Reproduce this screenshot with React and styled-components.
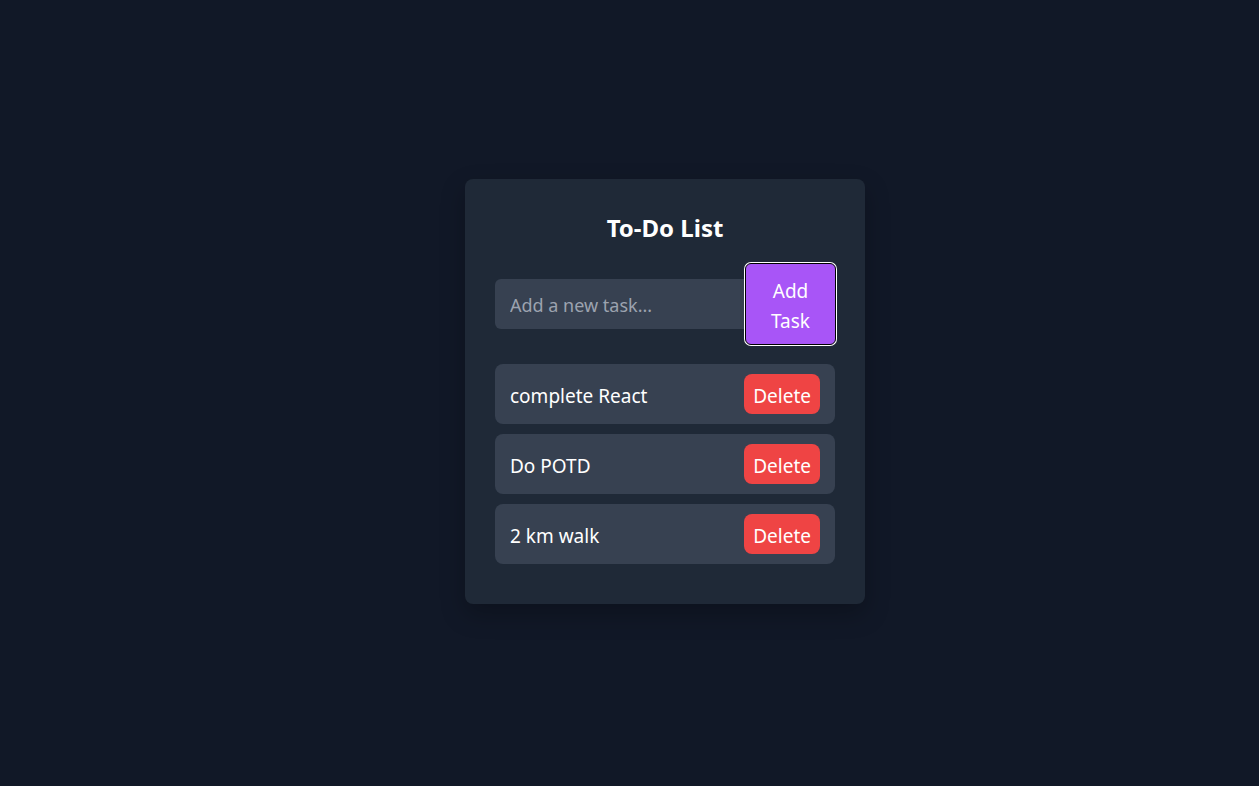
import React, { useState } from "react";
import styled, { createGlobalStyle } from "styled-components";

const GlobalStyle = createGlobalStyle`
  html, body {
    margin: 0;
    padding: 0;
    background: #111827;
  }
  body {
    font-family: "Noto Sans", "Open Sans", sans-serif;
  }
  * {
    box-sizing: border-box;
  }
`;

function App() {
  const [tasks, setTasks] = useState(["complete React", "Do POTD", "2 km walk"]);
  const [text, setText] = useState("");

  const addTask = () => {
    if (!text.trim()) return;
    setTasks([...tasks, text.trim()]);
    setText("");
  };

  return (
    <Page>
      <GlobalStyle />
      <Card>
        <Title>To-Do List</Title>
        <InputRow>
          <TaskInput
            placeholder="Add a new task..."
            value={text}
            onChange={(e) => setText(e.target.value)}
          />
          <AddBtn onClick={addTask}>Add Task</AddBtn>
        </InputRow>
        <TaskList>
          {tasks.map((t, i) => (
            <TaskItem key={i}>
              <span>{t}</span>
              <DeleteBtn onClick={() => setTasks(tasks.filter((_, j) => j !== i))}>
                Delete
              </DeleteBtn>
            </TaskItem>
          ))}
        </TaskList>
      </Card>
    </Page>
  );
}

export default App;

const Page = styled.div`
  min-height: 100vh;
  display: flex;
  justify-content: center;
  align-items: center;
  padding: 0 0 3px 71px;
`;

const Card = styled.div`
  width: 400px;
  background: #1f2937;
  border-radius: 8px;
  padding: 30px 30px 40px;
  box-shadow: 0 10px 25px rgba(0, 0, 0, 0.25);
  color: #ffffff;
`;

const Title = styled.h2`
  margin: 0 0 18px;
  text-align: center;
  font-size: 24px;
  line-height: 38px;
  font-weight: 700;
`;

const InputRow = styled.div`
  display: flex;
  align-items: center;
  margin-top: -2px;
  margin-bottom: 19px;
  margin-right: -1px;
`;

const TaskInput = styled.input`
  flex: 1;
  min-width: 0;
  height: 50px;
  padding: 2px 15px 0;
  border: none;
  border-radius: 6px 0 0 6px;
  background: #374151;
  color: #ffffff;
  font-family: inherit;
  font-size: 18px;
  outline: none;
  &::placeholder {
    color: #9ca3af;
  }
`;

const AddBtn = styled.button`
  width: 91px;
  height: 82px;
  padding: 4px 16px 0;
  background: #a855f7;
  color: #ffffff;
  border: 1px solid #000000;
  border-radius: 6px;
  box-shadow: 0 0 0 1px #ffffff;
  font-family: inherit;
  font-size: 19px;
  line-height: 30px;
  cursor: pointer;
`;

const TaskList = styled.ul`
  list-style: none;
  margin: 0;
  padding: 0;
  display: flex;
  flex-direction: column;
  gap: 10px;
`;

const TaskItem = styled.li`
  display: flex;
  justify-content: space-between;
  align-items: center;
  height: 60px;
  padding: 0 15px;
  background: #374151;
  border-radius: 8px;
  font-size: 19px;

  span {
    padding-top: 3px;
  }
`;

const DeleteBtn = styled.button`
  height: 40px;
  padding: 3px 9px 0;
  background: #ef4444;
  color: #ffffff;
  border: none;
  border-radius: 8px;
  font-family: inherit;
  font-size: 19px;
  cursor: pointer;
`;
